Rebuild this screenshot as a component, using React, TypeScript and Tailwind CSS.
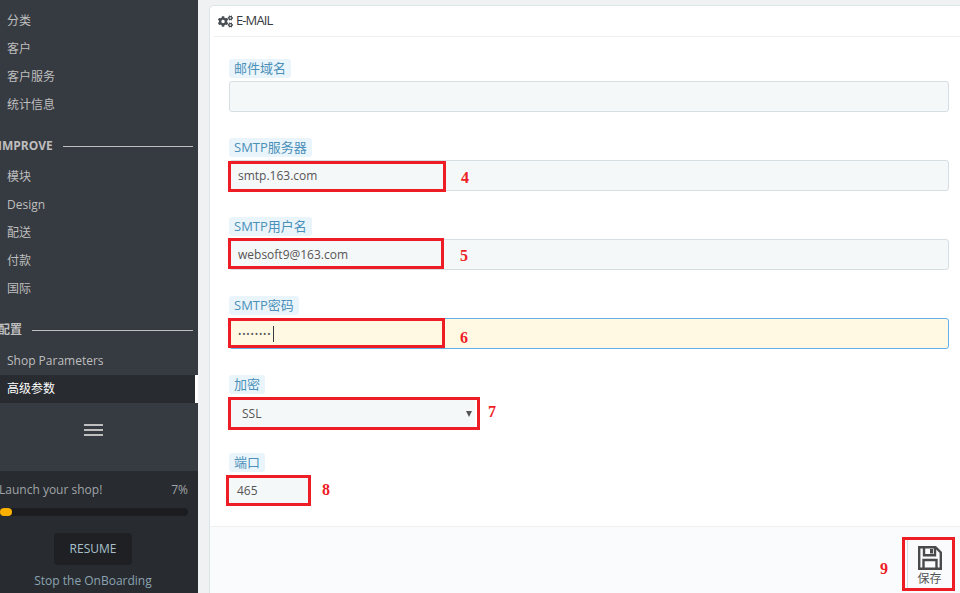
import React from 'react';
import { FaCogs } from 'react-icons/fa';

const cjk = "font-['Open_Sans','Noto_Sans_CJK_SC',sans-serif]";

const NavItem: React.FC<{ label: string; active?: boolean }> = ({ label, active }) => (
  <div
    className={`h-7 pl-[7px] flex items-center text-[12px] ${
      active ? 'bg-[#282b30] text-white border-r-[3px] border-white' : 'text-[#bebebe]'
    }`}
  >
    {label}
  </div>
);

const NavTitle: React.FC<{ label: string; className?: string }> = ({ label, className }) => (
  <div className={`flex items-center h-7 pr-[5px] ${className}`}>
    <span className="text-[12px] font-bold text-[#bebebe] whitespace-nowrap">{label}</span>
    <span className="flex-1 h-px bg-[#bebebe] ml-[10px]" />
  </div>
);

const Sidebar: React.FC = () => (
  <aside className="w-[198px] h-[593px] shrink-0 bg-[#363a41] flex flex-col overflow-hidden">
    <div className="pt-[7px]">
      <NavItem label="分类" />
      <NavItem label="客户" />
      <NavItem label="客户服务" />
      <NavItem label="统计信息" />
    </div>
    <NavTitle label="IMPROVE" className="mt-[13px] -ml-[2px]" />
    <div className="mt-[3px]">
      <NavItem label="模块" />
      <NavItem label="Design" />
      <NavItem label="配送" />
      <NavItem label="付款" />
      <NavItem label="国际" />
    </div>
    <NavTitle label="配置" className="mt-[13px] -ml-[2px]" />
    <div className="mt-[3px]">
      <NavItem label="Shop Parameters" />
      <NavItem label="高级参数" active />
    </div>
    <div className="h-[68px] shrink-0 flex flex-col items-center justify-center gap-[3px] pb-[15px] pr-[11px]">
      <span className="w-[19px] h-[2px] bg-[#bebebe]" />
      <span className="w-[19px] h-[2px] bg-[#bebebe]" />
      <span className="w-[19px] h-[2px] bg-[#bebebe]" />
    </div>
    <div className="flex-1 bg-[#282b30] pr-[10px]">
      <div className="flex justify-between mt-[10px] -ml-[1px] text-[12px] leading-[18px] text-[#a0a4a8]">
        <span>Launch your shop!</span>
        <span>7%</span>
      </div>
      <div className="h-2 mt-[9px] bg-[#1b1d20] rounded-full">
        <div className="h-2 w-3 bg-[#fbb000] rounded-full" />
      </div>
      <div className="flex justify-center mt-[17px] pr-[2px]">
        <button className="w-[78px] h-[32px] bg-[#1e2024] rounded text-[12px] text-[#a9c0cc]">RESUME</button>
      </div>
      <div className="text-center mt-[7px] pr-[2px] text-[12px] leading-[18px] text-[#8ba3b1] whitespace-nowrap">
        Stop the OnBoarding
      </div>
    </div>
  </aside>
);

const Mark: React.FC<{ n: string; className: string }> = ({ n, className }) => (
  <span className={`absolute text-[16px] leading-4 font-bold text-[#ee1c25] font-['Liberation_Serif',serif] ${className}`}>
    {n}
  </span>
);

const RedBox: React.FC<{ className: string }> = ({ className }) => (
  <div className={`absolute border-[3px] border-[#ee1c25] pointer-events-none ${className}`} />
);

const FieldLabel: React.FC<{ label: string }> = ({ label }) => (
  <div className="flex h-[19px]">
    <span className="px-[5px] bg-[#eaf5fb] rounded-[3px] text-[13px] leading-[19px] text-[#4a90b8]">{label}</span>
  </div>
);

const inputCls = 'h-[31px] mt-[3px] w-full rounded-[3px] border border-[#d5dee2] bg-[#f5f8f9] text-[12px] text-[#555] flex items-center';

const Field: React.FC<{ label: string; value?: string; children?: React.ReactNode }> = ({ label, value, children }) => (
  <div className="relative mb-[26px]">
    <FieldLabel label={label} />
    {children ?? <div className={`${inputCls} pl-2`}>{value}</div>}
  </div>
);

const App: React.FC = () => (
  <div className={`relative w-[960px] h-[593px] flex overflow-hidden bg-[#eff1f2] ${cjk}`}>
    <Sidebar />
    <main className="flex-1 pl-[11px] pt-[5px]">
      <div className="w-[760px] h-[588px] bg-white border-l border-t border-[#dbe6e9] rounded-tl-[5px] flex flex-col">
        <div className="h-[31px] shrink-0 mx-1 pl-1 flex items-center gap-[3px] border-b border-[#eef0f1] text-[13px] tracking-[-0.9px] text-[#363a41]">
          <FaCogs size={15} className="text-[#4a4e55]" />
          <span>E-MAIL</span>
        </div>
        <div className="flex-1 min-h-0 pt-[22px] pl-[19px] pr-[20px]">
          <Field label="邮件域名" value="" />
          <Field label="SMTP服务器" value="smtp.163.com" />
          <Field label="SMTP用户名" value="websoft9@163.com" />
          <Field label="SMTP密码">
            <div className={`${inputCls} pl-2 !bg-[#fff9e3] !border-[#66afe9] !text-[9px] tracking-[0.8px]`}>
              ••••••••<span className="w-px h-4 ml-[2px] bg-[#363a41]" />
            </div>
          </Field>
          <Field label="加密">
            <div className="h-[33px] mt-[3px] -mb-[3px] w-[246px] pl-[13px] pr-[3px] bg-[#f5f8f9] flex items-center justify-between text-[12px] text-[#555]">
              <span>SSL</span>
              <span className="border-x-[3px] border-t-[6px] border-x-transparent border-t-[#555]" />
            </div>
          </Field>
          <Field label="端口">
            <div className="h-[25px] mt-[6px] w-[80px] pl-2 bg-[#f5f8f9] flex items-center text-[12px] text-[#555]">465</div>
          </Field>
        </div>
        <div className="h-[67px] shrink-0 bg-[#fafbfc] border-t border-[#eef0f1]" />
      </div>
    </main>

    {/* annotations drawn over the screenshot */}
    <RedBox className="left-[228px] top-[161px] w-[218px] h-[31px]" />
    <RedBox className="left-[228px] top-[238px] w-[216px] h-[31px]" />
    <RedBox className="left-[228px] top-[318px] w-[217px] h-[30px]" />
    <RedBox className="left-[228px] top-[397px] w-[252px] h-[33px]" />
    <RedBox className="left-[226px] top-[475px] w-[85px] h-[31px]" />
    <Mark n="4" className="left-[461px] top-[170px]" />
    <Mark n="5" className="left-[460px] top-[248px]" />
    <Mark n="6" className="left-[460px] top-[330px]" />
    <Mark n="7" className="left-[488px] top-[404px]" />
    <Mark n="8" className="left-[322px] top-[482px]" />
    <Mark n="9" className="left-[880px] top-[561px]" />
    <div className="absolute left-[902px] top-[537px] w-[53px] h-[54px] border-[3px] border-[#ee1c25] text-[#555]">
      <div className="h-full ml-[2px] border-l border-[#d5dee2] flex flex-col items-center pt-[6px] pr-[1px]">
        <svg width="24" height="24" viewBox="0 0 24 24" fill="none" stroke="#4a4a4a" strokeWidth="2.4">
          <path d="M1.2 1.2h16.3l5.3 5.3v16.3H1.2z" />
          <path d="M6 1.2v8h11v-8" />
          <path d="M12 3h3v4.5h-3z" fill="#4a4a4a" stroke="none" />
          <path d="M5.5 23v-9h13v9" />
        </svg>
        <span className="text-[12px] leading-4 mt-[1px]">保存</span>
      </div>
    </div>
  </div>
);

export default App;
